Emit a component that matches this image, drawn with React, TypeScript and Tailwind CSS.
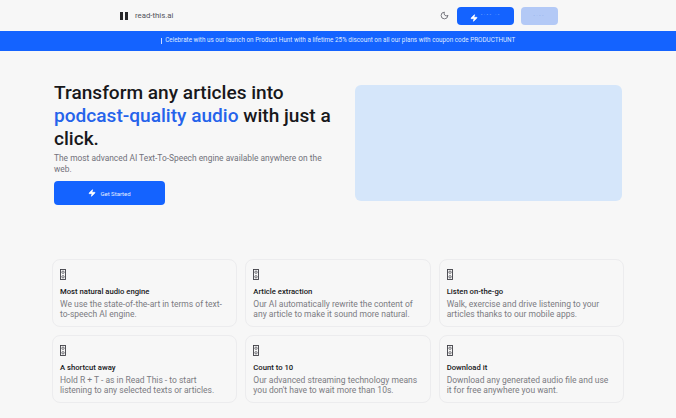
import React from 'react';
import { Moon, Zap } from 'lucide-react';

const FEATURES = [
  { title: 'Most natural audio engine', text: 'We use the state-of-the-art in terms of text-to-speech AI engine.' },
  { title: 'Article extraction', text: 'Our AI automatically rewrite the content of any article to make it sound more natural.' },
  { title: 'Listen on-the-go', text: 'Walk, exercise and drive listening to your articles thanks to our mobile apps.' },
  { title: 'A shortcut away', text: 'Hold R + T - as in Read This - to start listening to any selected texts or articles.' },
  { title: 'Count to 10', text: "Our advanced streaming technology means you don't have to wait more than 10s." },
  { title: 'Download it', text: 'Download any generated audio file and use it for free anywhere you want.' },
];

// the emoji font is missing in the reference, so it shows a hex box
const MissingGlyph = () => (
  <svg width="6" height="11" viewBox="0 0 6 11" fill="none" stroke="#3f3f46">
    <rect x="0.5" y="0.5" width="5" height="10" strokeWidth="0.9" />
    <circle cx="3" cy="3.2" r="1.2" strokeWidth="0.7" />
    <circle cx="3" cy="7.8" r="1.2" strokeWidth="0.7" />
  </svg>
);

const Header = () => (
  <header className="flex h-[31px] items-center bg-[#f7f7f7] pl-[120px] pr-[118px]">
    <div className="flex h-2 w-2 justify-between">
      <span className="w-[3px] bg-[#27272a]" />
      <span className="w-[3px] bg-[#27272a]" />
    </div>
    <span className="ml-[7px] text-[7.8px] text-[#52525b]">read-this.ai</span>
    <Moon className="ml-auto h-[9px] w-[9px] text-[#52525b]" strokeWidth={2} />
    <button className="ml-[8px] flex h-[18px] w-[57px] items-center justify-center gap-[3px] rounded-[4px] bg-[#1463ff]">
      <Zap className="mt-[4px] h-2 w-2 fill-white text-white" />
      <span className="mb-[3px] text-[2px] tracking-[2px] text-[#a9c4ff]">Sign in</span>
    </button>
    <button className="ml-[7px] flex h-[18px] w-[37px] items-center justify-center rounded-[4px] bg-[#b3c9f6]">
      <span className="text-[2px] tracking-[2px] text-[#8faae6]">Sign</span>
    </button>
  </header>
);

const Banner = () => (
  <div className="flex h-[20px] items-center justify-center bg-[#1463ff] text-[6.33px] text-[#dfe9ff]">
    <span className="mr-[3px] h-[6px] w-[1.5px] bg-[#c9daff]" />
    Celebrate with us our launch on Product Hunt with a lifetime 25% discount on all our plans with coupon code PRODUCTHUNT
  </div>
);

const Hero = () => (
  <section className="flex justify-between pl-[54px] pr-[54px] pt-[30px]">
    <div className="w-[285px]">
      <h1 className="text-[19.1px] font-medium leading-[23px] text-[#18181b]">
        Transform any articles into <span className="text-[#2563eb]">podcast-quality audio</span> with just a click.
      </h1>
      <p className="mt-[3px] text-[8.4px] leading-[10.5px] text-[#71717a]">
        The most advanced AI Text-To-Speech engine available anywhere on the web.
      </p>
      <button className="mt-[7px] flex h-[24px] w-[111px] items-center justify-center gap-[4px] rounded-[4px] bg-[#1463ff] text-[6px] text-[#e5edff]">
        <Zap className="h-2 w-2 fill-white text-white" />
        Get Started
      </button>
    </div>
    <div className="mt-[4px] h-[116px] w-[267px] rounded-[6px] bg-[#d5e6fa]" />
  </section>
);

const FeatureCard = ({ title, text }: { title: string; text: string }) => (
  <div className="h-[68px] rounded-[8px] border border-[#ececee] pl-[7px] pr-[10px] pt-[9px]">
    <div className="h-[12px]">
      <MissingGlyph />
    </div>
    <h3 className="mt-[6px] text-[7.7px] font-medium leading-[10px] text-[#18181b]">{title}</h3>
    <p className="mt-[2px] text-[8.5px] leading-[10px] text-[#7b7b82]">{text}</p>
  </div>
);

export default function App() {
  return (
    <div className="h-[418px] w-[676px] overflow-hidden bg-[#f7f7f7] font-['Roboto',sans-serif]">
      <Header />
      <Banner />
      <Hero />
      <section className="mt-[54px] grid grid-cols-3 gap-2 pl-[52px] pr-[52px]">
        {FEATURES.map((f) => (
          <FeatureCard key={f.title} {...f} />
        ))}
      </section>
    </div>
  );
}
